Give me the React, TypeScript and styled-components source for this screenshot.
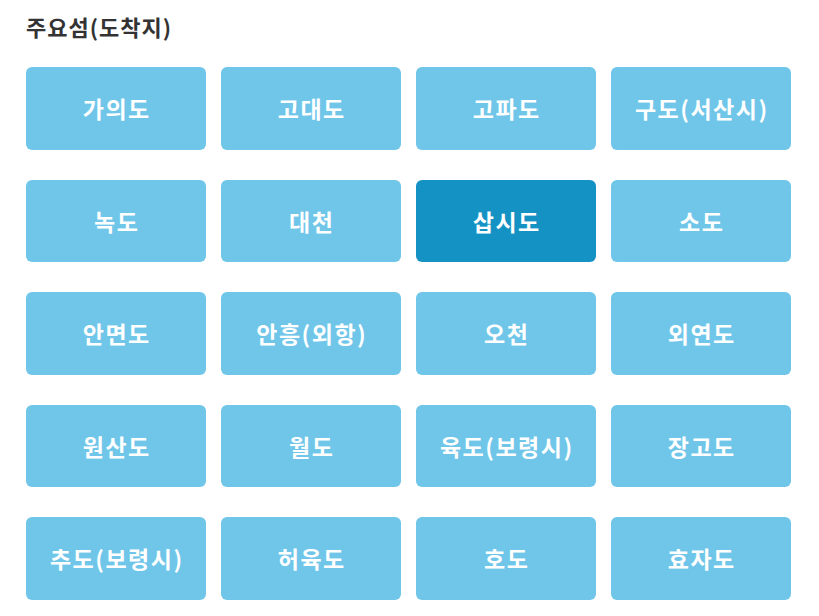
import React from 'react';
import styled, { createGlobalStyle } from 'styled-components';

const GlobalStyle = createGlobalStyle`
  body {
    margin: 0;
    background: #fff;
    font-family: "Noto Sans CJK KR", "Noto Sans", sans-serif;
  }
`;

const islands = [
  '가의도', '고대도', '고파도', '구도(서산시)',
  '녹도', '대천', '삽시도', '소도',
  '안면도', '안흥(외항)', '오천', '외연도',
  '원산도', '월도', '육도(보령시)', '장고도',
  '추도(보령시)', '허육도', '호도', '효자도',
];

const App = function App() {
  const selected = '삽시도';
  return (
    <Wrap>
      <GlobalStyle />
      <Title>주요섬(도착지)</Title>
      <Grid>
        {islands.map((name) => (
          <IslandButton key={name} type="button" $active={name === selected}>
            {name}
          </IslandButton>
        ))}
      </Grid>
    </Wrap>
  );
};

const Wrap = styled.div`
  padding: 10px 28px 0 26px;
`;

const Title = styled.h2`
  margin: 0 0 24px;
  font-size: 22px;
  line-height: 33px;
  letter-spacing: 1px;
  font-weight: 700;
  color: #333;
`;

const Grid = styled.div`
  display: grid;
  grid-template-columns: repeat(4, 180px);
  column-gap: 15px;
  row-gap: 30px;
`;

const IslandButton = styled.button<{ $active: boolean }>`
  height: 82.5px;
  border: 0;
  border-radius: 6px;
  background: ${(p) => (p.$active ? '#1592c4' : '#70c6e9')};
  color: #fff;
  font-family: inherit;
  font-size: 23px;
  letter-spacing: 1.5px;
  font-weight: 700;
  cursor: pointer;
  padding: 0 0 0 1.5px;
`;

export default App;
